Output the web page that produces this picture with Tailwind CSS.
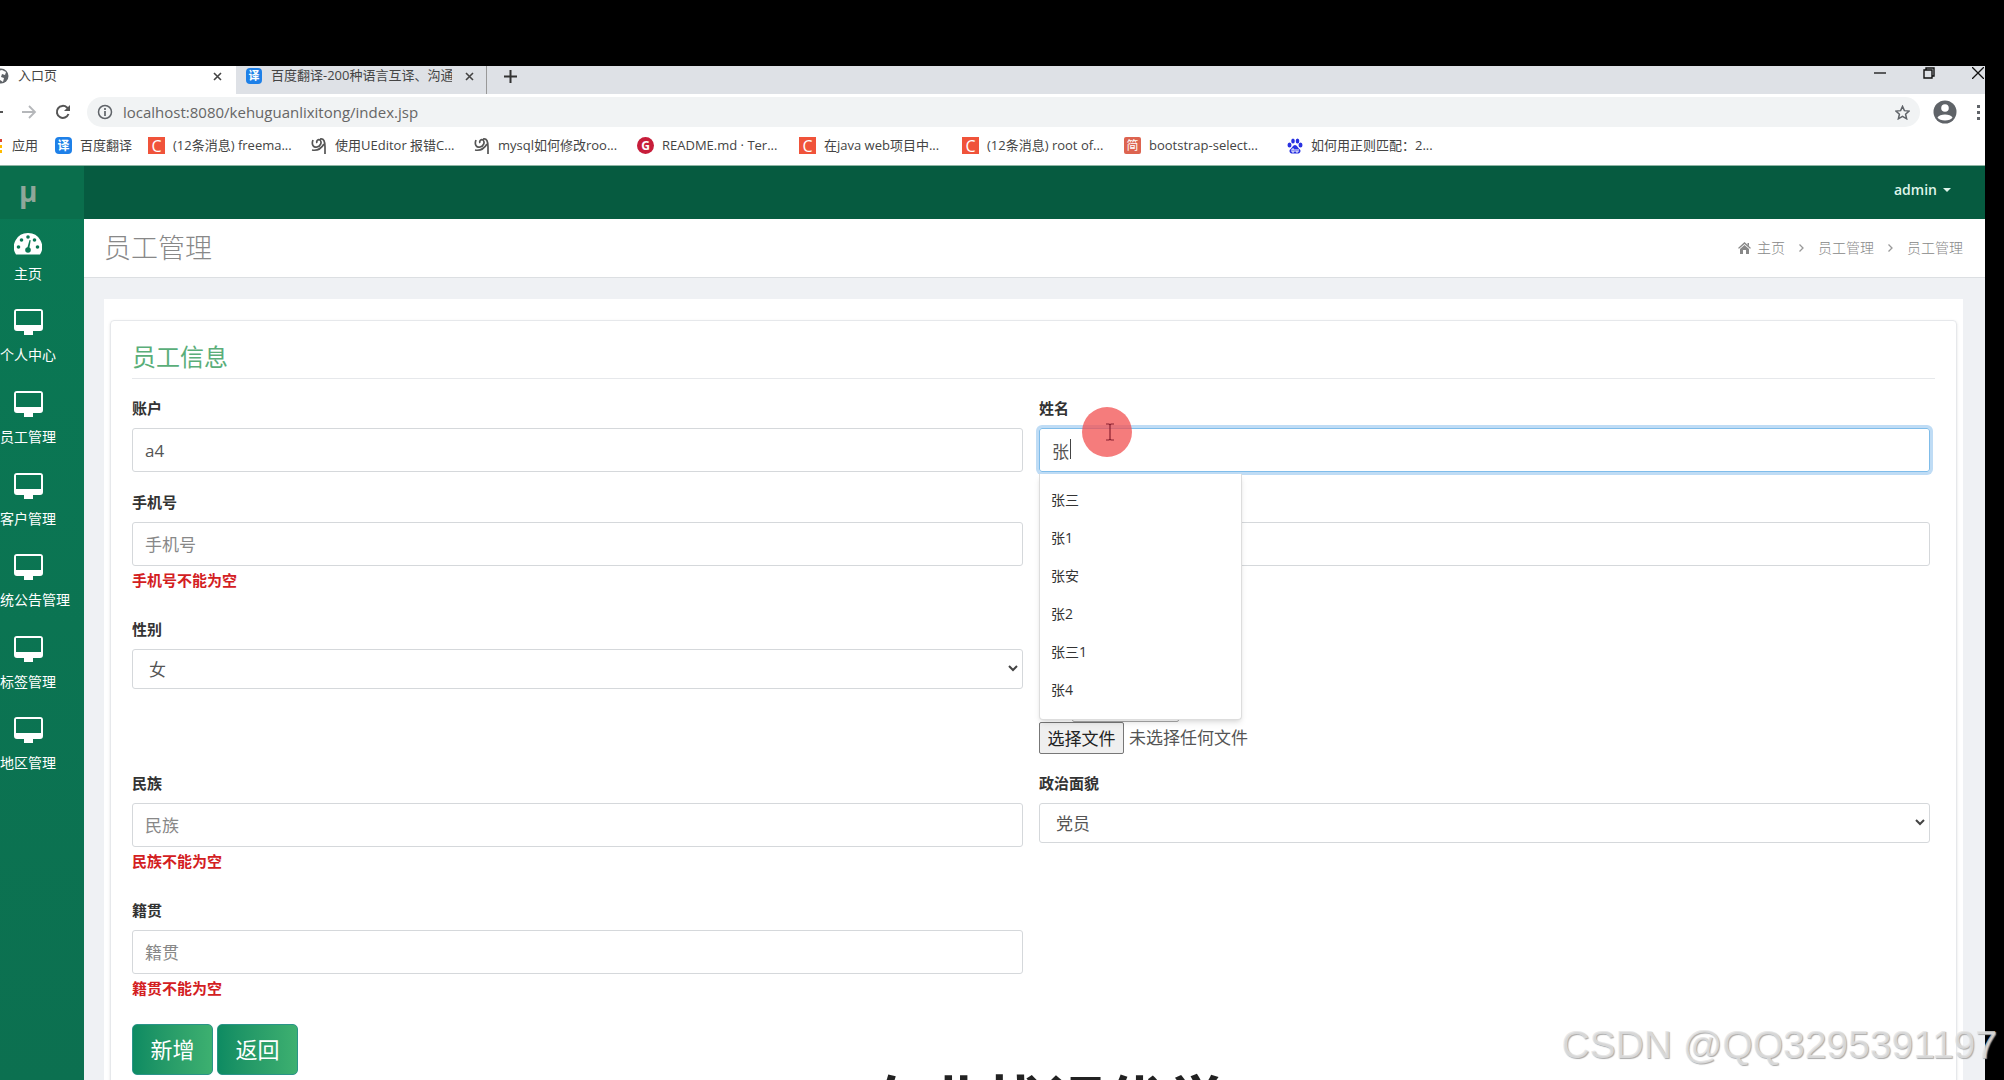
<!DOCTYPE html>
<html lang="zh-CN">
<head>
<meta charset="utf-8">
<title>入口页</title>
<script src="https://cdn.jsdelivr.net/npm/@tailwindcss/browser@4"></script>
</head>
<body class="bg-black font-['Open_Sans','Noto_Sans_CJK_SC',sans-serif] text-[#555]">
<svg class="hidden">
  <symbol id="desktop" viewBox="0 0 29 26"><path fill="currentColor" fill-rule="evenodd" d="M3 0h23a3 3 0 0 1 3 3v16a3 3 0 0 1-3 3h-7v4H10v-4H3a3 3 0 0 1-3-3V3a3 3 0 0 1 3-3zM2 2v14h25V2z"/></symbol>
  <symbol id="leaf" viewBox="0 0 16 18"><path fill="none" stroke="#555" stroke-width="1.700" d="M2 3c-2 5 1 8 4 7 4-1 5-5 3-7-2-1-4 1-3 3M9 2c4-1 5 3 5 8v7M1 13c5 1 9-1 12-6"/></symbol>
</svg>
<div class="relative flex h-screen flex-col overflow-hidden pt-[66px] pr-[19px]">

  <!-- Browser chrome -->
  <div class="shrink-0 bg-white text-xs text-[#444]">
    <div class="flex h-7 bg-[#dee1e6] text-[13px]">
      <div class="flex w-[236px] items-center bg-white pb-2 pr-[10px]">
        <svg class="-ml-[7px] size-4 shrink-0" viewBox="0 0 16 16"><circle cx="8" cy="8" r="7.500" fill="#5f6368"/><path fill="#fff" d="M9 2l4 2-1 3-3-1-1 3 3 1-1 4-3-2V9L3 7l2-4z"/></svg>
        <span class="ml-[9px] flex-1">入口页</span>
        <button aria-label="关闭" class="p-1"><svg class="size-[9px]" viewBox="0 0 9 9"><path stroke="#444" stroke-width="1.600" d="M1 1l7 7M8 1L1 8"/></svg></button>
      </div>
      <div class="flex w-[251px] items-center border-r border-[#999] bg-[#dee1e6] pb-2 pl-[10px] pr-2">
        <span class="flex size-4 shrink-0 items-center justify-center rounded-sm bg-[#1e80e8] text-[11px] font-bold text-white">译</span>
        <span class="ml-[9px] w-[181px] overflow-hidden whitespace-nowrap">百度翻译-200种语言互译、沟通</span>
        <button aria-label="关闭" class="ml-auto p-1"><svg class="size-[9px]" viewBox="0 0 9 9"><path stroke="#444" stroke-width="1.600" d="M1 1l7 7M8 1L1 8"/></svg></button>
      </div>
      <button aria-label="新标签页" class="ml-[17px] pb-2"><svg class="size-[13px]" viewBox="0 0 13 13"><path stroke="#333" stroke-width="2" d="M6.500 0v13M0 6.500h13"/></svg></button>
      <div class="ml-auto flex items-start gap-[37px] pt-px pr-px">
        <button aria-label="最小化"><svg class="size-3" viewBox="0 0 12 12"><path stroke="#111" stroke-width="1.300" d="M0 6h12"/></svg></button>
        <button aria-label="还原"><svg class="size-3" viewBox="0 0 12 12"><path fill="none" stroke="#111" stroke-width="1.400" d="M1 3h8v8H1zM3 3V1h8v8H9"/></svg></button>
        <button aria-label="关闭窗口"><svg class="size-3" viewBox="0 0 12 12"><path stroke="#111" stroke-width="1.300" d="M0 0l12 12M12 0L0 12"/></svg></button>
      </div>
    </div>
    <div class="flex h-9 items-center">
      <svg class="h-4 w-[3px]" viewBox="0 0 3 16"><path stroke="#555" stroke-width="2" d="M0 8h3"/></svg>
      <svg class="ml-[18px] size-4" viewBox="0 0 16 16"><path fill="none" stroke="#b5b7ba" stroke-width="1.800" d="M1 8h13M8 2l6 6-6 6"/></svg>
      <svg class="ml-[18px] size-4" viewBox="0 0 16 16"><path fill="none" stroke="#555" stroke-width="2" d="M13.500 10A6 6 0 1 1 12 3.500L14 6"/><path fill="#555" d="M15 1v6H9z"/></svg>
      <div class="ml-4 flex h-[30px] flex-1 items-center rounded-full bg-[#f1f3f4] pl-[10px] pr-[10px]">
        <svg class="size-4" viewBox="0 0 16 16"><circle cx="8" cy="8" r="6.500" fill="none" stroke="#5f6368" stroke-width="1.500"/><path stroke="#5f6368" stroke-width="1.700" d="M8 7v5M8 4v2"/></svg>
        <input aria-label="地址" value="localhost:8080/kehuguanlixitong/index.jsp" class="ml-[10px] flex-1 bg-transparent text-[15px] text-[#666] outline-none">
        <svg class="size-[15px]" viewBox="0 0 16 16"><path fill="none" stroke="#5f6368" stroke-width="1.600" d="M8 1.500l2 4.500 5 .5-3.700 3.300 1.100 4.900L8 12.200l-4.400 2.500 1.100-4.900L1 6.500 6 6z"/></svg>
      </div>
      <svg class="ml-[13px] size-6" viewBox="0 0 24 24"><circle cx="12" cy="12" r="11.500" fill="#5f6368"/><circle cx="12" cy="8" r="3.800" fill="#fff"/><path fill="#fff" d="M4.500 17.500c2-4 13-4 15 0-2 4-13 4-15 0z"/></svg>
      <svg class="ml-5 mr-1 h-4 w-1" viewBox="0 0 4 16"><path fill="#5f6368" d="M0 1h3v3H0zM0 7h3v3H0zM0 13h3v3H0z"/></svg>
    </div>
    <div class="flex h-9 items-center whitespace-nowrap border-b border-[#8fb5a5] pb-[3px] text-[13px]">
      <a href="#" class="flex w-[55px] items-center"><svg class="h-4 w-[2px]" viewBox="0 0 2 16"><path fill="#d43" d="M0 1h2v3H0z"/><path fill="#fb0" d="M0 7h2v3H0zM0 12h2v3H0z"/></svg><span class="ml-[10px]">应用</span></a>
      <a href="#" class="flex w-[93px] items-center gap-2"><span class="flex size-[17px] items-center justify-center rounded-sm bg-[#1e80e8] text-xs font-bold text-white">译</span>百度翻译</a>
      <a href="#" class="flex w-[163px] items-center gap-2"><span class="flex size-[17px] items-center justify-center bg-[#f0533a] text-base text-white">C</span>(12条消息) freema...</a>
      <a href="#" class="flex w-[163px] items-center gap-2"><svg class="h-[18px] w-4"><use href="#leaf"/></svg>使用UEditor 报错C...</a>
      <a href="#" class="flex w-[163px] items-center gap-2"><svg class="h-[18px] w-4"><use href="#leaf"/></svg>mysql如何修改roo...</a>
      <a href="#" class="flex w-[162px] items-center gap-2"><span class="flex size-[17px] items-center justify-center rounded-full bg-[#c71d3a] text-xs font-bold text-white">G</span>README.md · Ter...</a>
      <a href="#" class="flex w-[163px] items-center gap-2"><span class="flex size-[17px] items-center justify-center bg-[#f0533a] text-base text-white">C</span>在java web项目中...</a>
      <a href="#" class="flex w-[162px] items-center gap-2"><span class="flex size-[17px] items-center justify-center bg-[#f0533a] text-base text-white">C</span>(12条消息) root of...</a>
      <a href="#" class="flex w-[163px] items-center gap-2"><span class="flex size-[17px] items-center justify-center rounded-xs bg-[#dd6450] text-xs text-white">简</span>bootstrap-select...</a>
      <a href="#" class="flex w-[163px] items-center gap-2"><svg class="size-4" viewBox="0 0 16 16"><g fill="#2932e1"><ellipse cx="2.500" cy="7" rx="2" ry="2.500"/><ellipse cx="6" cy="3" rx="1.800" ry="2.500"/><ellipse cx="10.500" cy="3" rx="1.800" ry="2.500"/><ellipse cx="13.500" cy="7" rx="2" ry="2.500"/><path d="M8 7c2 0 3 3 5 4.500 1.500 2-.5 4.500-3 4H6c-2.500.5-4.500-2-3-4C5 10 6 7 8 7z"/></g><path stroke="#fff" fill="none" d="M5 11h2v3H5zM9 11v3h2v-3"/></svg>如何用正则匹配：2...</a>
    </div>
  </div>

  <!-- Application -->
  <div class="flex min-h-0 flex-1 bg-[#eff1f4]">
    <nav class="w-[84px] shrink-0 overflow-hidden bg-linear-to-b from-[#0a7854] to-[#0c7050] text-sm text-white">
      <a href="#" class="flex h-[53px] items-center bg-[#0a6e4c] pb-1 pl-[19px] text-[28px] font-bold leading-none text-[#8fa79a]">μ</a>
      <ul class="-ml-[27px] w-[110px] text-center leading-5">
        <li class="h-[81px] pt-[13px]"><a href="#" class="flex flex-col items-center gap-[9px] whitespace-nowrap"><svg class="h-[23px] w-7" viewBox="0 0 28 23"><path fill="currentColor" d="M14 1a14 14 0 0 1 12 21.500H2A14 14 0 0 1 14 1z"/><g fill="#0a7854"><circle cx="4.500" cy="15" r="1.800"/><circle cx="7.500" cy="8" r="1.800"/><circle cx="14" cy="5" r="1.800"/><circle cx="20.500" cy="8" r="1.800"/><circle cx="23.500" cy="15" r="1.800"/><circle cx="14" cy="18" r="2.800"/><path d="M13 17l2.500-9 1.200.3L15 18z"/></g></svg>主页</a></li>
        <li class="h-[82px] pt-[9px]"><a href="#" class="flex flex-col items-center gap-[10px] whitespace-nowrap"><svg class="h-[26px] w-[29px]"><use href="#desktop"/></svg>个人中心</a></li>
        <li class="h-[82px] pt-[9px]"><a href="#" class="flex flex-col items-center gap-[10px] whitespace-nowrap"><svg class="h-[26px] w-[29px]"><use href="#desktop"/></svg>员工管理</a></li>
        <li class="h-[81px] pt-[9px]"><a href="#" class="flex flex-col items-center gap-[10px] whitespace-nowrap"><svg class="h-[26px] w-[29px]"><use href="#desktop"/></svg>客户管理</a></li>
        <li class="h-[82px] pt-[9px]"><a href="#" class="flex flex-col items-center gap-[10px] whitespace-nowrap"><svg class="h-[26px] w-[29px]"><use href="#desktop"/></svg>系统公告管理</a></li>
        <li class="h-[81px] pt-[9px]"><a href="#" class="flex flex-col items-center gap-[10px] whitespace-nowrap"><svg class="h-[26px] w-[29px]"><use href="#desktop"/></svg>标签管理</a></li>
        <li class="h-[82px] pt-[9px]"><a href="#" class="flex flex-col items-center gap-[10px] whitespace-nowrap"><svg class="h-[26px] w-[29px]"><use href="#desktop"/></svg>地区管理</a></li>
      </ul>
    </nav>

    <div class="min-w-0 flex-1">
      <header class="flex h-[53px] items-center justify-end bg-[#065b40] pb-[6px] pr-[34px]">
        <button class="flex items-center gap-[6px] text-sm font-semibold text-[#dff5ea]">admin<svg class="h-1 w-2" viewBox="0 0 8 4"><path fill="currentColor" d="M0 0h8L4 4z"/></svg></button>
      </header>
      <div class="flex h-[59px] items-center justify-between border-b border-[#dcdfe2] bg-white pl-5 pr-[22px]">
        <h1 class="text-[27px] font-light text-[#888]">员工管理</h1>
        <nav class="flex items-center text-sm font-light text-[#888]">
          <svg class="mr-[6px] h-3 w-[13px]" viewBox="0 0 13 12"><path fill="#888" d="M6.500 0L13 6l-1 .8L6.500 2 1 6.800 0 6zM2 7l4.500-4L11 7v5H8V8H5v4H2zM9.500 1h1.500v3L9.500 2.500z"/></svg>
          <a href="#">主页</a>
          <svg class="mx-[14px] h-2 w-[5px]" viewBox="0 0 5 8"><path fill="none" stroke="#999" stroke-width="1.300" d="M.5.5L4 4 .5 7.500"/></svg>
          <a href="#">员工管理</a>
          <svg class="mx-[14px] h-2 w-[5px]" viewBox="0 0 5 8"><path fill="none" stroke="#999" stroke-width="1.300" d="M.5.5L4 4 .5 7.500"/></svg>
          <a href="#">员工管理</a>
        </nav>
      </div>

      <main class="ml-5 mr-[22px] mt-[21px] bg-white px-[6px] pt-[21px]">
        <form class="rounded-sm border border-[#e6e8eb] px-[21px] pb-10 pt-4 shadow-sm">
          <h2 class="h-[42px] border-b border-[#e6e8eb] text-2xl leading-10 text-[#5aae79]">员工信息</h2>
          <div class="mr-[5px] grid grid-cols-2 gap-x-4 text-[17px]">
            <div class="h-[94px] pt-[19px]">
              <label for="account" class="block text-[15px] font-bold leading-5 text-[#333]">账户</label>
              <input id="account" value="a4" class="mt-[10px] block h-11 w-full rounded-[3px] border border-[#d5d8db] px-3">
            </div>
            <div class="relative h-[94px] pt-[19px]">
              <label for="name" class="block text-[15px] font-bold leading-5 text-[#333]">姓名</label>
              <input id="name" value="张" class="mt-[10px] block h-11 w-full rounded-[3px] border border-[#80bdea] px-3 shadow-[0_0_0_3px_#bfdcf5] outline-none">
              <span class="absolute left-[31px] top-[60px] h-5 w-px bg-[#444]"></span>
              <ul class="absolute left-0 top-[95px] z-10 h-[246px] w-[203px] rounded-b-sm border border-t-0 border-[#ddd] bg-white pl-[11px] pt-[7px] text-sm leading-[38px] text-[#333] shadow-md">
                <li>张三</li><li>张1</li><li>张安</li><li>张2</li><li>张三1</li><li>张4</li>
              </ul>
              <div class="absolute left-[43px] top-7 z-20 flex size-[50px] items-center justify-center rounded-full bg-[#f25050]/75">
                <svg class="ml-[6px] h-[18px] w-2" viewBox="0 0 8 18"><path fill="none" stroke="#8a2030" stroke-width="1.200" d="M0 1h3l1 1 1-1h3M4 2v14M0 17h3l1-1 1 1h3"/></svg>
              </div>
            </div>
            <div class="h-[127px] pt-[19px]">
              <label for="phone" class="block text-[15px] font-bold leading-5 text-[#333]">手机号</label>
              <input id="phone" placeholder="手机号" class="mt-[10px] block h-11 w-full rounded-[3px] border border-[#d5d8db] px-3 placeholder:text-[#888]">
              <p class="mt-1 text-[15px] font-bold leading-5 text-[#d3201f]">手机号不能为空</p>
            </div>
            <div class="h-[127px] pt-[49px]">
              <input id="idcard" aria-label="身份证号" class="block h-11 w-full rounded-[3px] border border-[#d5d8db] px-3">
            </div>
            <div class="h-[154px] pt-[19px]">
              <label for="gender" class="block text-[15px] font-bold leading-5 text-[#333]">性别</label>
              <div class="relative mt-[10px]">
                <select id="gender" class="block h-10 w-full appearance-none rounded-[3px] border border-[#d5d8db] px-4 pt-px"><option>女</option><option>男</option></select>
                <svg class="pointer-events-none absolute right-[5px] top-4 h-[7px] w-[10px]" viewBox="0 0 10 7"><path fill="none" stroke="#444" stroke-width="2" d="M1 1l4 4 4-4"/></svg>
              </div>
            </div>
            <div class="h-[154px] pt-[49px]">
              <div class="ml-[33px] h-[73px] w-[107px] rounded-xs border border-[#aaa]"></div>
              <input id="photo" type="file" aria-label="照片" class="hidden">
              <div class="flex items-center gap-[5px]">
                <button type="button" onclick="document.getElementById('photo').click()" class="h-8 w-[85px] rounded-xs border border-[#777] bg-[#efefef] leading-none text-[#222]">选择文件</button>
                <span>未选择任何文件</span>
              </div>
            </div>
            <div class="h-[127px] pt-[19px]">
              <label for="nation" class="block text-[15px] font-bold leading-5 text-[#333]">民族</label>
              <input id="nation" placeholder="民族" class="mt-[10px] block h-11 w-full rounded-[3px] border border-[#d5d8db] px-3 placeholder:text-[#888]">
              <p class="mt-1 text-[15px] font-bold leading-5 text-[#d3201f]">民族不能为空</p>
            </div>
            <div class="h-[127px] pt-[19px]">
              <label for="politics" class="block text-[15px] font-bold leading-5 text-[#333]">政治面貌</label>
              <div class="relative mt-[10px]">
                <select id="politics" class="block h-10 w-full appearance-none rounded-[3px] border border-[#d5d8db] px-4 pt-px"><option>党员</option><option>群众</option></select>
                <svg class="pointer-events-none absolute right-[5px] top-4 h-[7px] w-[10px]" viewBox="0 0 10 7"><path fill="none" stroke="#444" stroke-width="2" d="M1 1l4 4 4-4"/></svg>
              </div>
            </div>
            <div class="h-[127px] pt-[19px]">
              <label for="origin" class="block text-[15px] font-bold leading-5 text-[#333]">籍贯</label>
              <input id="origin" placeholder="籍贯" class="mt-[10px] block h-11 w-full rounded-[3px] border border-[#d5d8db] px-3 placeholder:text-[#888]">
              <p class="mt-1 text-[15px] font-bold leading-5 text-[#d3201f]">籍贯不能为空</p>
            </div>
          </div>
          <div class="mt-4 flex gap-1">
            <button type="button" class="h-[51px] w-[81px] rounded-[5px] border border-[#2a9488] bg-linear-to-r from-[#0d8b62] to-[#3db070] text-[22px] text-white">新增</button>
            <button type="button" class="h-[51px] w-[81px] rounded-[5px] border border-[#2a9488] bg-linear-to-r from-[#0d8b62] to-[#3db070] text-[22px] text-white">返回</button>
          </div>
        </form>
      </main>
    </div>
  </div>

  <!-- Caption and watermark laid over the frame -->
  <p class="absolute left-[866px] top-full -mt-[7px] whitespace-nowrap text-[60px] font-bold leading-[60px] text-[#222]">在业找误优学</p>
  <p class="absolute bottom-[11px] right-[7px] whitespace-nowrap font-['Liberation_Sans',sans-serif] text-[39px] leading-[48px] text-[#e4e4e4]/80 [text-shadow:1px_1px_1px_#aaa]">CSDN @QQ3295391197</p>
</div>
</body>
</html>
